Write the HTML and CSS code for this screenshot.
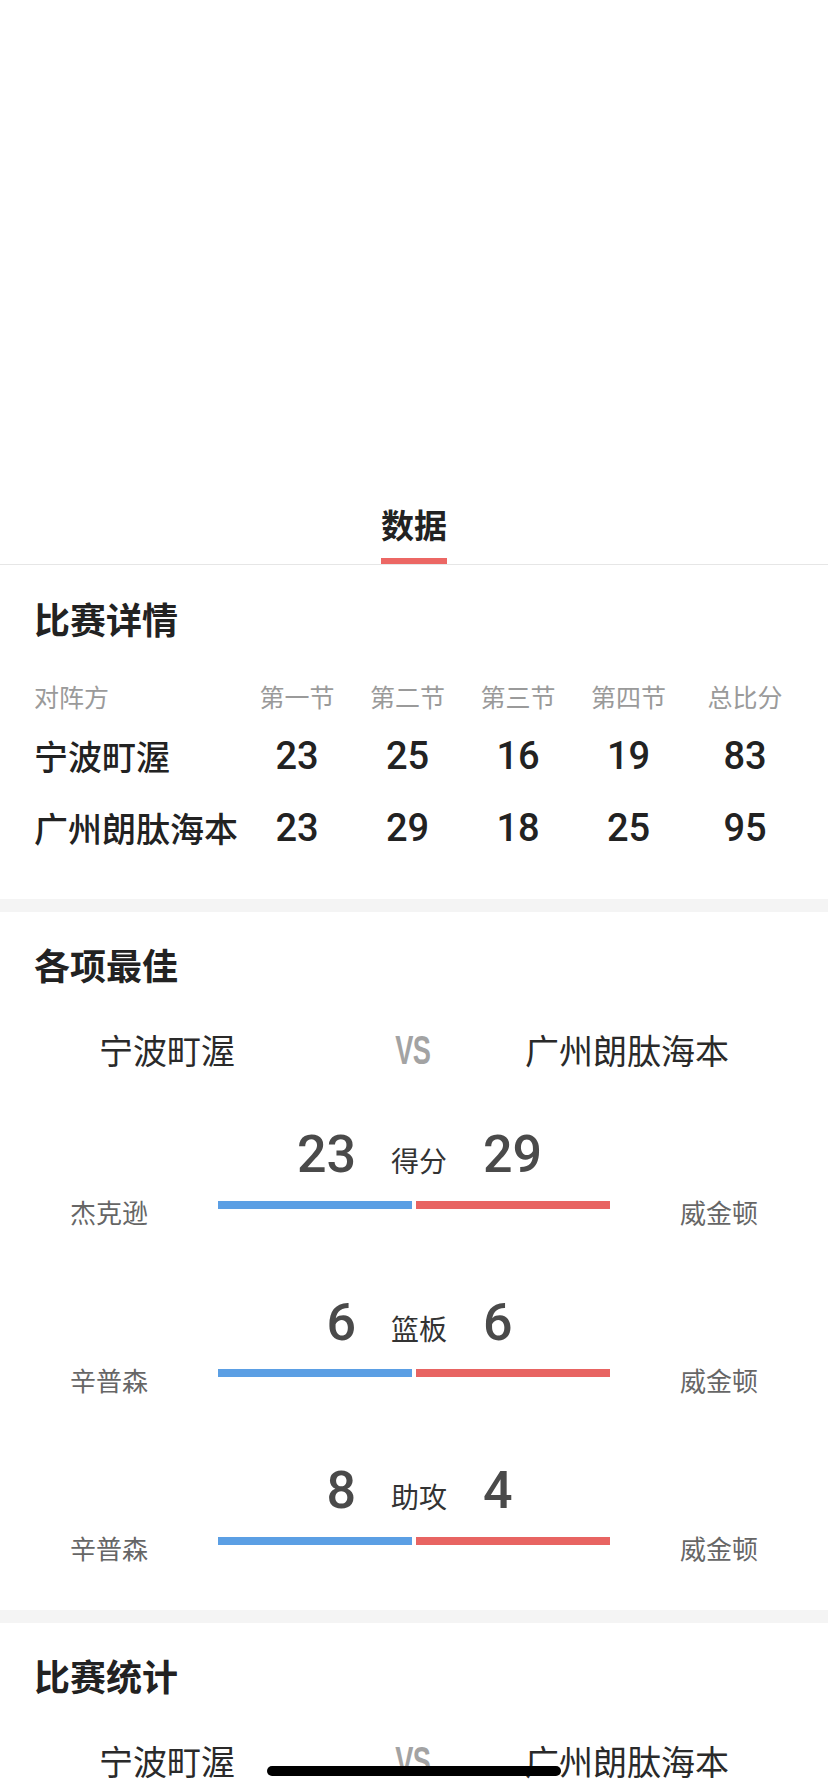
FILE: index.html
```html
<!DOCTYPE html>
<html lang="zh-CN">
<head>
<meta charset="utf-8">
<title>数据</title>
<link rel="stylesheet" href="styles.css">
</head>
<body>
<div class="page">
  <div class="top">
    <div class="hero"></div>
    <nav class="tabs">
      <div class="tab active">
        <span class="tab-text">数据</span>
        <span class="tab-line"></span>
      </div>
    </nav>
  </div>

  <section class="card">
    <h2 class="card-title">比赛详情</h2>
    <div class="score-grid">
      <div class="cell head name">对阵方</div>
      <div class="cell head">第一节</div>
      <div class="cell head">第二节</div>
      <div class="cell head">第三节</div>
      <div class="cell head">第四节</div>
      <div class="cell head">总比分</div>

      <div class="cell team">宁波町渥</div>
      <div class="cell num">23</div>
      <div class="cell num">25</div>
      <div class="cell num">16</div>
      <div class="cell num">19</div>
      <div class="cell num">83</div>

      <div class="cell team">广州朗肽海本</div>
      <div class="cell num">23</div>
      <div class="cell num">29</div>
      <div class="cell num">18</div>
      <div class="cell num">25</div>
      <div class="cell num">95</div>
    </div>
  </section>

  <section class="card card-best">
    <h2 class="card-title">各项最佳</h2>
    <div class="versus">
      <span class="vs-team home">宁波町渥</span>
      <span class="vs-mark">VS</span>
      <span class="vs-team away">广州朗肽海本</span>
    </div>
    <div class="stats">
      <div class="stat">
        <div class="stat-nums">
          <span class="stat-num left">23</span>
          <span class="stat-label">得分</span>
          <span class="stat-num right">29</span>
        </div>
        <div class="stat-bars">
          <span class="player">杰克逊</span>
          <div class="bars"><span class="bar home"></span><span class="bar away"></span></div>
          <span class="player">威金顿</span>
        </div>
      </div>
      <div class="stat">
        <div class="stat-nums">
          <span class="stat-num left">6</span>
          <span class="stat-label">篮板</span>
          <span class="stat-num right">6</span>
        </div>
        <div class="stat-bars">
          <span class="player">辛普森</span>
          <div class="bars"><span class="bar home"></span><span class="bar away"></span></div>
          <span class="player">威金顿</span>
        </div>
      </div>
      <div class="stat">
        <div class="stat-nums">
          <span class="stat-num left">8</span>
          <span class="stat-label">助攻</span>
          <span class="stat-num right">4</span>
        </div>
        <div class="stat-bars">
          <span class="player">辛普森</span>
          <div class="bars"><span class="bar home"></span><span class="bar away"></span></div>
          <span class="player">威金顿</span>
        </div>
      </div>
    </div>
  </section>

  <section class="card card-stats">
    <h2 class="card-title">比赛统计</h2>
    <div class="versus">
      <span class="vs-team home">宁波町渥</span>
      <span class="vs-mark">VS</span>
      <span class="vs-team away">广州朗肽海本</span>
    </div>
  </section>
</div>
<div class="home-indicator"></div>
</body>
</html>
```

FILE: styles.css
```css
* { box-sizing: border-box; }

html, body {
  margin: 0;
  padding: 0;
  background: #fff;
}

body {
  font-family: "Noto Sans CJK SC", "Noto Sans", sans-serif;
  color: #222;
}

.page {
  display: flex;
  flex-direction: column;
  background: #f4f4f4;
}

.top {
  background: #fff;
}

.hero {
  height: 504px;
  background: #fff;
}

.tabs {
  display: flex;
  justify-content: center;
  border-bottom: 1px solid #e6e6e6;
}

.tab {
  display: flex;
  flex-direction: column;
  align-items: center;
}

.tab-text {
  font-size: 33px;
  line-height: 40px;
  font-weight: 700;
  color: #222;
}

.tab-line {
  display: block;
  width: 66px;
  height: 6px;
  margin-top: 14px;
  background: #ec6764;
}

.card {
  background: #fff;
  padding: 31px 0 35px;
}

.card + .card {
  margin-top: 13px;
}

.card-title {
  margin: 0 0 0 34px;
  font-size: 36px;
  line-height: 44px;
  font-weight: 700;
  color: #222;
}

/* score table */
.score-grid {
  display: grid;
  grid-template-columns: 1fr 110px 111px 110px 111px 122px;
  padding: 0 22px 0 34px;
  margin-top: 39px;
}

.cell {
  text-align: center;
  white-space: nowrap;
}

.cell.head {
  font-size: 25px;
  line-height: 34px;
  color: #9a9a9a;
  padding-bottom: 7px;
}

.cell.head.name,
.cell.team {
  text-align: left;
}

.cell.team {
  font-size: 34px;
  line-height: 72px;
  font-weight: 500;
  color: #222;
}

.cell.num {
  font-family: Roboto, "Noto Sans", sans-serif;
  font-size: 38px;
  line-height: 72px;
  font-weight: 500;
  color: #222;
}

/* best players */
.card-best {
  padding: 30px 0 45px;
}

.card-stats {
  padding: 30px 0 60px;
}

.versus {
  display: grid;
  grid-template-columns: 266px 225px 1fr;
  align-items: center;
  padding-left: 34px;
  margin-top: 42px;
  height: 44px;
}

.vs-team {
  font-size: 34px;
  line-height: 44px;
  color: #2a2a2a;
  white-space: nowrap;
}

.vs-team.home { text-align: center; }
.vs-team.away { text-align: left; }

.vs-mark {
  justify-self: center;
  font-family: "Liberation Sans", Arial, sans-serif;
  font-size: 40px;
  line-height: 44px;
  font-weight: 700;
  letter-spacing: -1px;
  color: #a3a3a3;
  transform: scaleX(0.68);
}

.stats {
  display: flex;
  flex-direction: column;
  gap: 64px;
  margin-top: 53px;
}

.stat-nums {
  display: flex;
  justify-content: center;
  align-items: baseline;
  height: 60px;
}

.stat-num {
  font-family: Roboto, "Noto Sans", sans-serif;
  font-size: 52px;
  line-height: 60px;
  font-weight: 500;
  color: #4a4a4a;
}

.stat-num.left {
  width: 161px;
  text-align: right;
}

.stat-num.right {
  width: 150px;
  text-align: left;
}

.stat-label {
  font-size: 28px;
  line-height: 60px;
  color: #333;
  margin: 0 36px 0 35px;
}

.stat-bars {
  display: grid;
  grid-template-columns: 218px 1fr 218px;
  align-items: start;
  margin-top: 10px;
}

.player {
  text-align: center;
  font-size: 26px;
  line-height: 34px;
  color: #666;
}

.bars {
  display: flex;
  gap: 4px;
  margin-top: 6px;
}

.bar {
  flex: 1;
  height: 8px;
}

.bar.home { background: #5b9fe4; }
.bar.away { background: #e86462; }

.home-indicator {
  position: fixed;
  left: 267px;
  bottom: 16px;
  width: 294px;
  height: 10px;
  border-radius: 5px;
  background: #000;
}
```
